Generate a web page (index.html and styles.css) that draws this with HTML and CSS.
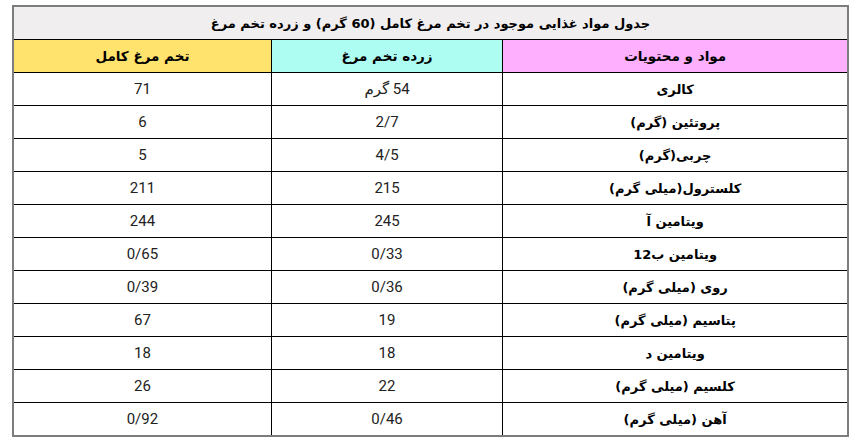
FILE: index.html
```html
<!DOCTYPE html>
<html lang="fa" dir="rtl">
<head>
<meta charset="utf-8">
<link rel="stylesheet" href="styles.css">
</head>
<body>
<div class="wrap">
<table class="nutri">
<colgroup><col class="c1"><col class="c2"><col class="c3"></colgroup>
<tr class="title"><th colspan="3">جدول مواد غذایی موجود در تخم مرغ کامل (60 گرم) و زرده تخم مرغ</th></tr>
<tr class="head">
<th class="pink">مواد و محتویات</th>
<th class="cyan">زرده تخم مرغ</th>
<th class="yellow">تخم مرغ کامل</th>
</tr>
<tr><td class="lbl">کالری</td><td class="num">54 گرم</td><td class="num">71</td></tr>
<tr><td class="lbl">پروتئین (گرم)</td><td class="num">2/7</td><td class="num">6</td></tr>
<tr><td class="lbl">چربی(گرم)</td><td class="num">4/5</td><td class="num">5</td></tr>
<tr><td class="lbl">کلسترول(میلی گرم)</td><td class="num">215</td><td class="num">211</td></tr>
<tr><td class="lbl">ویتامین آ</td><td class="num">245</td><td class="num">244</td></tr>
<tr><td class="lbl">ویتامین ب12</td><td class="num">0/33</td><td class="num">0/65</td></tr>
<tr><td class="lbl">روی (میلی گرم)</td><td class="num">0/36</td><td class="num">0/39</td></tr>
<tr><td class="lbl">پتاسیم (میلی گرم)</td><td class="num">19</td><td class="num">67</td></tr>
<tr><td class="lbl">ویتامین د</td><td class="num">18</td><td class="num">18</td></tr>
<tr><td class="lbl">کلسیم (میلی گرم)</td><td class="num">22</td><td class="num">26</td></tr>
<tr><td class="lbl">آهن (میلی گرم)</td><td class="num">0/46</td><td class="num">0/92</td></tr>
</table>
</div>
</body>
</html>
```
FILE: styles.css
```css
html, body {
  margin: 0;
  padding: 0;
  background: #fff;
}
.wrap {
  padding: 5px 6px 0 12px;
}
.nutri {
  width: 837px;
  border-collapse: collapse;
  border: 2px solid #7d7d7d;
  font-family: "DejaVu Sans", sans-serif;
  color: #000;
}
.c1 { width: 346px; }
.c2 { width: 232px; }
.c3 { width: 259px; }
.nutri th, .nutri td {
  height: 32px;
  padding: 0;
  text-align: center;
  vertical-align: middle;
  border: 1px solid #000;
}
.title th {
  background: #f0eeef;
  font-size: 13px;
  font-weight: bold;
  border-top: 2px solid #7d7d7d;
  border-left: 2px solid #7d7d7d;
  border-right: 2px solid #7d7d7d;
}
.head th {
  font-size: 13.5px;
  font-weight: bold;
}
.pink { background: #feaffe; }
.cyan { background: #adfdf3; }
.yellow { background: #ffe36c; }
.lbl {
  font-size: 13px;
  font-weight: bold;
}
.num {
  font-family: Roboto, "DejaVu Sans", sans-serif;
  font-size: 15px;
  color: #222;
}
.nutri tr > :first-child { border-right: 2px solid #7d7d7d; }
.nutri tr > :last-child { border-left: 2px solid #7d7d7d; }
.nutri tr:last-child > * { border-bottom: 2px solid #7d7d7d; }
```
